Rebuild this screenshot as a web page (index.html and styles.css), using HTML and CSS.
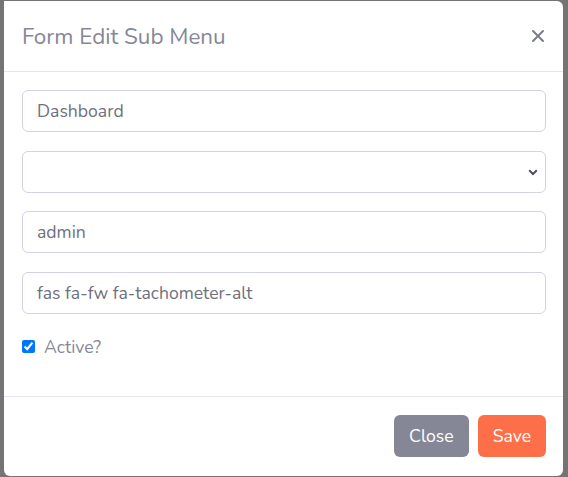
FILE: index.html
```html
<!DOCTYPE html>
<html lang="en">
<head>
<meta charset="utf-8">
<title>Form Edit Sub Menu</title>
<link rel="stylesheet" href="styles.css">
</head>
<body>
<div class="modal">
  <div class="modal-header">
    <h5 class="modal-title">Form Edit Sub Menu</h5>
    <button class="close" type="button" aria-label="Close">
      <svg width="14" height="14" viewBox="0 0 14 14"><path d="M2 2L12 12M12 2L2 12" stroke="#7b7d87" stroke-width="2" stroke-linecap="round"/></svg>
    </button>
  </div>
  <div class="modal-body">
    <div class="form-group"><input class="form-control" type="text" value="Dashboard"></div>
    <div class="form-group select-wrap">
      <div class="form-control select"></div>
      <svg class="chevron" width="10" height="7" viewBox="0 0 10 7"><path d="M1.2 1.3L5 5L8.8 1.3" fill="none" stroke="#4e5058" stroke-width="2"/></svg>
    </div>
    <div class="form-group"><input class="form-control" type="text" value="admin"></div>
    <div class="form-group"><input class="form-control" type="text" value="fas fa-fw fa-tachometer-alt"></div>
    <label class="form-check"><input type="checkbox" checked><span>Active?</span></label>
  </div>
  <div class="modal-footer">
    <button class="btn btn-secondary" type="button">Close</button>
    <button class="btn btn-save" type="button">Save</button>
  </div>
</div>
</body>
</html>
```
FILE: styles.css
```css
html, body {
  margin: 0;
  padding: 0;
}
body {
  background: #747474;
  height: 477px;
  overflow: hidden;
  font-family: "Nunito", "Open Sans", "Noto Sans", sans-serif;
}
.modal {
  margin: 1px 5px 0 4px;
  height: 475px;
  box-sizing: border-box;
  background: #fff;
  border-radius: 0 6px 6px 6px;
  display: flex;
  flex-direction: column;
}
.modal-header {
  display: flex;
  align-items: center;
  justify-content: space-between;
  padding: 18.5px 18px 18.5px 18px;
  border-bottom: 1px solid #e3e6f0;
}
.modal-title {
  margin: 0;
  font-size: 22.4px;
  line-height: 33px;
  font-weight: 400;
  color: #858796;
}
.close {
  border: 0;
  background: none;
  padding: 0;
  width: 14px;
  height: 14px;
  display: flex;
  cursor: pointer;
}
.modal-body {
  flex: 1;
  padding: 18px 17px 0 18px;
}
.form-group {
  margin-bottom: 18.67px;
}
.form-control {
  display: block;
  width: 100%;
  height: 42px;
  box-sizing: border-box;
  border: 1px solid #d1d3e2;
  border-radius: 6px;
  padding: 0 14px;
  font-family: inherit;
  font-size: 17.6px;
  color: #6e707e;
  background: #fff;
  outline: none;
}
.select-wrap {
  position: relative;
}
.chevron {
  position: absolute;
  right: 8px;
  top: 18px;
}
.form-check {
  display: flex;
  align-items: center;
  gap: 9px;
  margin-top: 20px;
  font-size: 17.6px;
  line-height: 26px;
  color: #858796;
}
.form-check input {
  margin: 0;
  width: 13px;
  height: 13px;
}
.modal-footer {
  display: flex;
  justify-content: flex-end;
  gap: 9px;
  padding: 18px 17px 19px 18px;
  border-top: 1px solid #e3e6f0;
}
.btn {
  height: 42px;
  border: 0;
  border-radius: 6px;
  padding: 0 15px;
  font-family: inherit;
  font-size: 17.6px;
  color: #fff;
  cursor: pointer;
}
.btn-secondary {
  background: #858796;
}
.btn-save {
  background: #fd6f49;
}
```
